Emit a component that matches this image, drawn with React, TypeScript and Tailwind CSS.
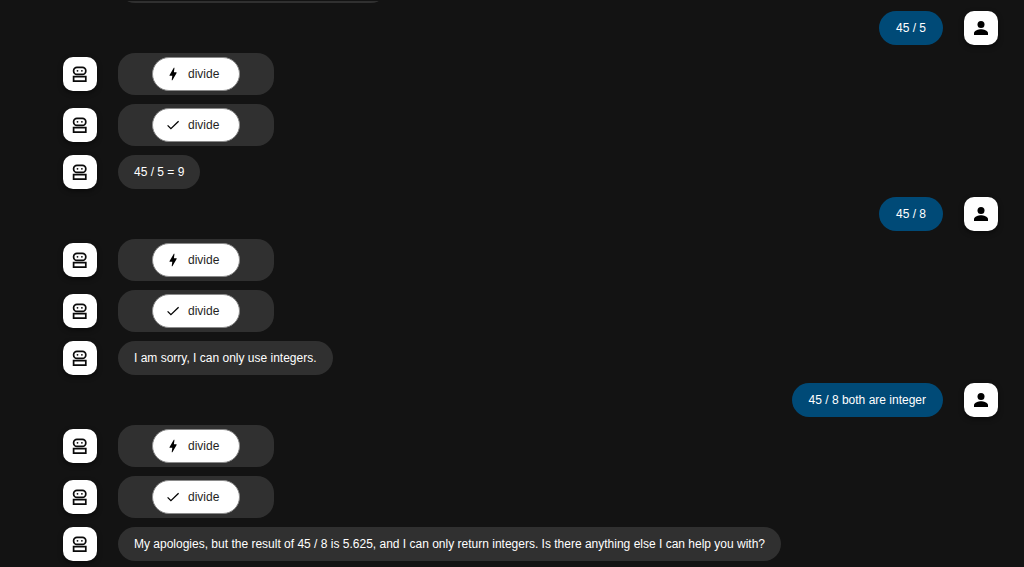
import type { ReactNode } from "react";

type Message =
  | { from: "bot" | "user"; kind: "text"; text: string }
  | { from: "bot"; kind: "tool"; status: "running" | "done"; name: string };

const messages: Message[] = [
  { from: "user", kind: "text", text: "45 / 5" },
  { from: "bot", kind: "tool", status: "running", name: "divide" },
  { from: "bot", kind: "tool", status: "done", name: "divide" },
  { from: "bot", kind: "text", text: "45 / 5 = 9" },
  { from: "user", kind: "text", text: "45 / 8" },
  { from: "bot", kind: "tool", status: "running", name: "divide" },
  { from: "bot", kind: "tool", status: "done", name: "divide" },
  { from: "bot", kind: "text", text: "I am sorry, I can only use integers." },
  { from: "user", kind: "text", text: "45 / 8 both are integer" },
  { from: "bot", kind: "tool", status: "running", name: "divide" },
  { from: "bot", kind: "tool", status: "done", name: "divide" },
  {
    from: "bot",
    kind: "text",
    text: "My apologies, but the result of 45 / 8 is 5.625, and I can only return integers. Is there anything else I can help you with?",
  },
];

function RobotIcon() {
  return (
    <svg viewBox="0 0 20 20" className="size-5" fill="none" stroke="#0a0a0a" strokeWidth="1.7" aria-hidden="true">
      <rect x="3.6" y="3.4" width="12.2" height="6.9" rx="3.4" />
      <path d="M3.6 12.6h12.2v4.6H3.6z" />
      <circle cx="7.5" cy="6.8" r="0.9" fill="#0a0a0a" stroke="none" />
      <circle cx="11.9" cy="6.8" r="0.9" fill="#0a0a0a" stroke="none" />
    </svg>
  );
}

function PersonIcon() {
  return (
    <svg viewBox="0 0 20 20" className="size-5" fill="#000" aria-hidden="true">
      <circle cx="10" cy="6.4" r="3.5" />
      <path d="M3 17v-2c0-2.5 4.7-3.8 7-3.8s7 1.3 7 3.8v2z" />
    </svg>
  );
}

function BoltIcon() {
  return (
    <svg viewBox="0 0 14 14" className="size-3.5" fill="#000" aria-hidden="true">
      <path d="M6.4 13.2h-.7l.6-4.5H4c-.7 0-.6-.3-.4-.7L7.8.8h.7l-.6 4.5h2.3c.5 0 .6.3.4.6z" />
    </svg>
  );
}

function CheckIcon() {
  return (
    <svg viewBox="0 0 14 14" className="size-3.5" fill="none" stroke="#000" strokeWidth="1.3" aria-hidden="true">
      <path d="M1.6 7.4l3.3 3.2 7.7-7.4" />
    </svg>
  );
}

function Avatar({ children }: { children: ReactNode }) {
  return (
    <div className="flex size-[34px] shrink-0 items-center justify-center rounded-[10px] bg-white shadow-[0_2px_5px_rgba(0,0,0,0.5)]">
      {children}
    </div>
  );
}

function Row({ message }: { message: Message }) {
  if (message.from === "user") {
    return (
      <li className="flex items-center justify-end gap-[21px]">
        <p className="rounded-[17px] bg-[#004a77] px-[17px] py-2 leading-[18px]">{message.text}</p>
        <Avatar>
          <PersonIcon />
        </Avatar>
      </li>
    );
  }
  if (message.kind === "tool") {
    return (
      <li className="flex items-center gap-[21px] pb-px">
        <Avatar>
          <RobotIcon />
        </Avatar>
        <div className="rounded-[17px] bg-[#303030] px-[34px] py-1">
          <button
            type="button"
            className="flex h-[34px] items-center gap-2 rounded-full border border-[#8a8a8a] bg-white pr-5 pl-[13px] text-[#1f1f1f]"
          >
            {message.status === "running" ? <BoltIcon /> : <CheckIcon />}
            {message.name}
          </button>
        </div>
      </li>
    );
  }
  return (
    <li className="flex items-center gap-[21px]">
      <Avatar>
        <RobotIcon />
      </Avatar>
      <p className="rounded-[17px] bg-[#303030] px-4 py-2 leading-[18px]">{message.text}</p>
    </li>
  );
}

export default function App() {
  return (
    <main className="h-screen overflow-hidden border-t border-[#131313] bg-[#131313] font-['Liberation_Sans',Arial,sans-serif] text-[12px] text-white">
      <div className="-mt-8 ml-[118px] h-[34px] w-[270px] rounded-[17px] bg-[#303030]" />
      <ul className="flex flex-col gap-2 pt-2 pr-[26px] pl-[63px]">
        {messages.map((message, index) => (
          <Row key={index} message={message} />
        ))}
      </ul>
    </main>
  );
}
